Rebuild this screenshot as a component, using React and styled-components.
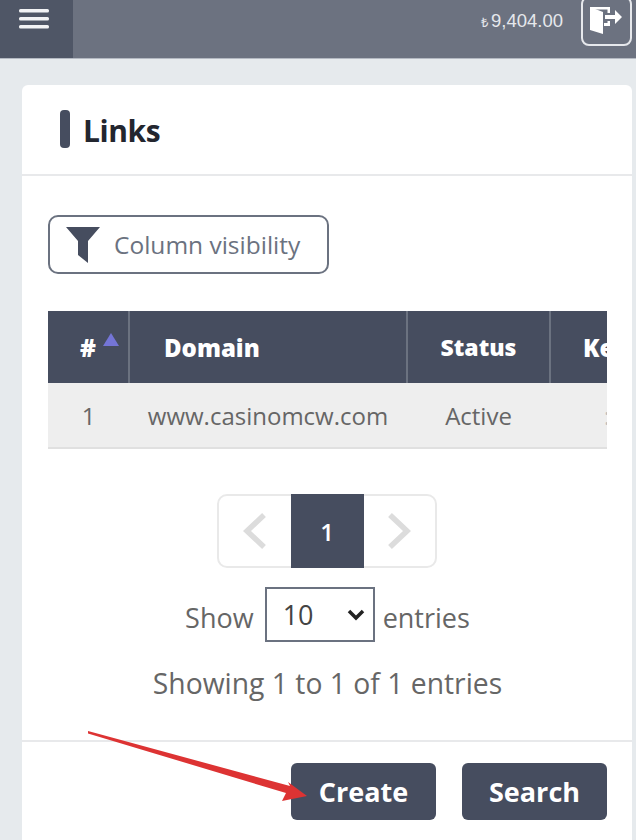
import React from 'react'
import styled, { createGlobalStyle } from 'styled-components'

const GlobalStyle = createGlobalStyle`
  * { box-sizing: border-box; }
  html, body {
    margin: 0;
    height: 840px;
    overflow: hidden;
    background: #e6eaed;
    font-family: "Open Sans", "Noto Sans", sans-serif;
  }
`

const Page = styled.div`
  position: relative;
  width: 636px;
  height: 840px;
  overflow: hidden;
`

const TopBar = styled.header`
  display: flex;
  align-items: flex-start;
  height: 59px;
  background: #6c7280;
  border-bottom: 1px solid #b4b9c2;
`

const MenuBlock = styled.div`
  width: 73px;
  height: 58px;
  background: #4f5666;
  padding: 8px 0 0 19px;
`

const Balance = styled.div`
  margin-left: auto;
  padding-top: 10px;
  font-family: "Liberation Sans", sans-serif;
  font-size: 18.5px;
  line-height: 22px;
  color: #e6e8ec;
  small {
    font-size: 13px;
    margin-right: 3px;
  }
`

const LogoutButton = styled.div`
  width: 51px;
  height: 50px;
  margin: -4px 4px 0 18px;
  border: 2px solid #e6e8ec;
  border-radius: 8px;
  padding: 8px 0 0 6px;
`

const Card = styled.main`
  margin: 26px 4px 0 22px;
  height: 780px;
  background: #fff;
  border-radius: 6px 6px 0 0;
`

const CardHeader = styled.div`
  display: flex;
  align-items: center;
  gap: 13px;
  height: 91px;
  padding: 0 0 2px 38px;
  border-bottom: 2px solid #e8e9eb;
`

const TitleBar = styled.span`
  width: 10px;
  height: 38px;
  border-radius: 4px;
  background: #464d5f;
`

const Title = styled.h1`
  margin: 4px 0 0 0;
  font-size: 30px;
  font-weight: 700;
  letter-spacing: -0.4px;
  color: #23262f;
`

const CardBody = styled.div`
  padding: 39px 25px 0 26px;
  height: 566px;
  border-bottom: 2px solid #e8e9eb;
`

const ColumnButton = styled.div`
  display: flex;
  align-items: center;
  gap: 13px;
  width: 281px;
  height: 59px;
  padding-left: 15px;
  border: 2px solid #6b7280;
  border-radius: 10px;
  font-size: 24.5px;
  color: #6b7280;
`

const TableWrap = styled.div`
  width: 559px;
  margin-top: 37px;
  overflow: hidden;
`

const Table = styled.table`
  width: 640px;
  table-layout: fixed;
  border-collapse: collapse;
`

const HeadCell = styled.th`
  position: relative;
  height: 72px;
  padding: 0 0 0 ${p => p.$pad || 0}px;
  text-align: ${p => p.$pad ? 'left' : 'center'};
  background: #464d5f;
  border-right: 2px solid #6b7280;
  color: #fff;
  font-size: ${p => p.$small ? 23 : 24}px;
  font-weight: 800;
`

const SortMark = styled.span`
  position: absolute;
  top: 22px;
  left: 55px;
  border-left: 8px solid transparent;
  border-right: 8px solid transparent;
  border-bottom: 13px solid #7475d6;
`

const Cell = styled.td`
  height: 65px;
  padding: 0 0 0 ${p => p.$pad || 0}px;
  text-align: ${p => p.$pad ? 'left' : 'center'};
  background: #eee;
  border-bottom: 2px solid #e0e0e0;
  color: ${p => p.$faint ? '#bbb' : '#666'};
  font-size: 24px;
`

const Pager = styled.div`
  display: flex;
  width: 220px;
  height: 74px;
  margin: 45px 0 0 169px;
  border: 2px solid #e9e9e9;
  border-radius: 10px;
`

const PagerArrow = styled.div`
  display: flex;
  flex: 1;
  align-items: center;
  justify-content: center;
`

const PagerCurrent = styled.div`
  display: flex;
  align-items: center;
  justify-content: center;
  width: 73px;
  margin: -2px 0;
  background: #464d5f;
  color: #fff;
  font-size: 24px;
  font-weight: 600;
`

const LengthRow = styled.div`
  display: flex;
  align-items: center;
  justify-content: center;
  margin-top: 19px;
  font-size: 27px;
  color: #666;
`

const SelectBox = styled.div`
  display: flex;
  align-items: center;
  justify-content: space-between;
  width: 110px;
  height: 55px;
  margin: 0 8px 6px 11px;
  padding: 0 8px 0 16px;
  border: 2px solid #6b7280;
  color: #444;
`

const Info = styled.div`
  margin-top: 16px;
  text-align: center;
  font-size: 28.3px;
  color: #666;
`

const Footer = styled.div`
  display: flex;
  justify-content: flex-end;
  gap: 26px;
  padding: 21px 25px 0 0;
`

const ActionButton = styled.div`
  display: flex;
  align-items: center;
  justify-content: center;
  width: 145px;
  height: 57px;
  border-radius: 6px;
  background: #464d5f;
  color: #fff;
  font-size: 27px;
  font-weight: 700;
`

const Annotation = styled.svg`
  position: absolute;
  top: 725px;
  left: 85px;
`

function MenuIcon() {
  return (
    <svg width="30" height="22" viewBox="0 0 30 22" fill="#f2f3f5">
      <rect y="1" width="30" height="3.5" rx="1.5" />
      <rect y="9" width="30" height="3.5" rx="1.5" />
      <rect y="17" width="30" height="3.5" rx="1.5" />
    </svg>
  )
}

function DoorIcon() {
  return (
    <svg width="34" height="30" viewBox="0 0 34 30" fill="#fff">
      <path d="M1 1 L14 6 V28 L1 24 Z" />
      <path d="M1 1 H21 V7 H18.5 V3.5 H1 Z" />
      <path d="M15 17 H18.5 V15 H21 V20 H15 Z" />
      <path d="M16 9 H26 V4 L33 11 L26 18 V13 H16 Z" />
    </svg>
  )
}

function FilterIcon() {
  return (
    <svg width="36" height="38" viewBox="0 0 36 38" fill="#464d5f">
      <path d="M1 1 H35 L23 15 V37 L13 29 V15 Z" />
    </svg>
  )
}

function Chevron({ flip }) {
  return (
    <svg width="24" height="36" viewBox="0 0 24 36" fill="none" stroke="#dcdcdc" strokeWidth="5.5">
      <path d={flip ? 'M3 2 L20 18 L3 34' : 'M21 2 L4 18 L21 34'} />
    </svg>
  )
}

export default function App() {
  return (
    <Page>
      <GlobalStyle />
      <TopBar>
        <MenuBlock><MenuIcon /></MenuBlock>
        <Balance><small>₺</small>9,404.00</Balance>
        <LogoutButton><DoorIcon /></LogoutButton>
      </TopBar>
      <Card>
        <CardHeader>
          <TitleBar />
          <Title>Links</Title>
        </CardHeader>
        <CardBody>
          <ColumnButton>
            <FilterIcon />
            Column visibility
          </ColumnButton>
          <TableWrap>
            <Table>
              <colgroup>
                <col width="81" />
                <col width="278" />
                <col width="143" />
                <col width="138" />
              </colgroup>
              <thead>
                <tr>
                  <HeadCell>#<SortMark /></HeadCell>
                  <HeadCell $pad={34}>Domain</HeadCell>
                  <HeadCell $small>Status</HeadCell>
                  <HeadCell $pad={32}>Key</HeadCell>
                </tr>
              </thead>
              <tbody>
                <tr>
                  <Cell>1</Cell>
                  <Cell>www.casinomcw.com</Cell>
                  <Cell>Active</Cell>
                  <Cell $pad={54} $faint>:</Cell>
                </tr>
              </tbody>
            </Table>
          </TableWrap>
          <Pager>
            <PagerArrow><Chevron /></PagerArrow>
            <PagerCurrent>1</PagerCurrent>
            <PagerArrow><Chevron flip /></PagerArrow>
          </Pager>
          <LengthRow>
            Show
            <SelectBox>
              10
              <svg width="18" height="12" viewBox="0 0 18 12" fill="none" stroke="#222" strokeWidth="3.5">
                <path d="M2 2 L9 9 L16 2" />
              </svg>
            </SelectBox>
            entries
          </LengthRow>
          <Info>Showing 1 to 1 of 1 entries</Info>
        </CardBody>
        <Footer>
          <ActionButton>Create</ActionButton>
          <ActionButton>Search</ActionButton>
        </Footer>
      </Card>
      <Annotation width="230" height="85" viewBox="0 0 230 85" fill="#dd3333">
        <path d="M3 6 L3 8.5 L201 68 L197 76 L222 71 L203 57 L205 61 Z" />
      </Annotation>
    </Page>
  )
}
